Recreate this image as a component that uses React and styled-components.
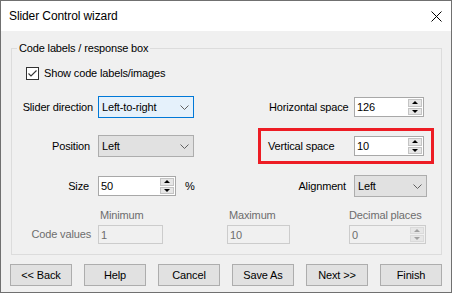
import React from 'react';
import styled, { createGlobalStyle } from 'styled-components';

const GlobalStyle = createGlobalStyle`
    html, body {
        margin: 0;
        padding: 0;
        background: #ffffff;
    }
    body {
        font-family: "Liberation Sans", Arial, sans-serif;
        color: #000;
    }
    * {
        box-sizing: border-box;
    }
`;

const Window = styled.div`
    width: 452px;
    height: 293px;
    border: 1px solid #707070;
    background-color: #f0f0f0;
    display: flex;
    flex-direction: column;
`;

const TitleBar = styled.header`
    height: 30px;
    flex: none;
    background-color: #ffffff;
    display: flex;
    align-items: center;
    justify-content: space-between;
    padding: 0 9px 0 8px;
    font-size: 12px;
    letter-spacing: -0.1px;
`;

const Content = styled.main`
    flex: 1;
    display: flex;
    flex-direction: column;
    padding: 10px 9px 6px 10px;
    font-size: 11px;
    letter-spacing: -0.15px;
`;

const GroupBox = styled.fieldset`
    margin: 0;
    padding: 5px 0 8px 0;
    border: 1px solid #dcdcdc;
    min-width: 0;
`;

const Caption = styled.legend`
    margin-left: 5px;
    padding: 0 2px;
    line-height: 14px;
`;

const Row = styled.div`
    height: ${p => p.$height}px;
    display: flex;
    align-items: center;
    padding-left: ${p => p.$indent || 0}px;
`;

const LeftCell = styled.div`
    width: 246px;
    flex: none;
    display: flex;
    align-items: center;
`;

const FieldLabel = styled.span`
    width: ${p => p.$width || 86}px;
    flex: none;
    text-align: ${p => p.$align || 'right'};
    padding-right: ${p => p.$padRight ?? 6}px;
    padding-left: ${p => p.$padLeft || 0}px;
    color: ${p => (p.$disabled ? '#6d6d6d' : '#000')};
    white-space: nowrap;
`;

const RightField = styled.div`
    width: 176px;
    height: 36px;
    flex: none;
    display: flex;
    align-items: center;
    border: 3px solid ${p => (p.$highlight ? '#ed1c24' : 'transparent')};
`;

const CheckRow = styled.label`
    display: flex;
    align-items: center;
    gap: 5px;
`;

const CheckBox = styled.span`
    width: 13px;
    height: 13px;
    border: 1px solid #333333;
    background: #ffffff;
    display: flex;
`;

const ComboFrame = styled.div`
    width: ${p => p.$width}px;
    height: 22px;
    flex: none;
    display: flex;
    align-items: center;
    justify-content: space-between;
    padding: 0 4px 0 3px;
    border: 1px solid ${p => (p.$focused ? '#0078d7' : '#adadad')};
    background-color: ${p => (p.$focused ? '#e5f1fb' : '#e1e1e1')};
`;

const EditFrame = styled.div`
    width: ${p => p.$width}px;
    height: ${p => p.$height || 20}px;
    flex: none;
    display: flex;
    align-items: stretch;
    border: 1px solid ${p => (p.$disabled ? '#cccccc' : '#a8a8a8')};
    background-color: ${p => (p.$disabled ? '#f0f0f0' : '#ffffff')};
    color: ${p => (p.$disabled ? '#6d6d6d' : '#000')};
`;

const EditValue = styled.span`
    flex: 1;
    display: flex;
    align-items: center;
    padding-left: 2px;
`;

const SpinButtons = styled.div`
    width: 14px;
    margin: 1px 1px 1px 0;
    display: flex;
    flex-direction: column;
    gap: 1px;
`;

const SpinButton = styled.span`
    flex: 1;
    display: flex;
    align-items: center;
    justify-content: center;
    background-color: #e6e6e6;
    border: 1px solid ${p => (p.$disabled ? '#dadada' : '#c4c4c4')};
`;

const Arrow = styled.span`
    width: 0;
    height: 0;
    border-left: 3px solid transparent;
    border-right: 3px solid transparent;
    ${p => (p.$up ? 'border-bottom' : 'border-top')}: 3px solid ${p => (p.$disabled ? '#a0a0a0' : '#000')};
`;

const Unit = styled.span`
    margin-left: 9px;
`;

const ValuesGrid = styled.div`
    height: 38px;
    display: grid;
    grid-template-columns: 86px 129px 122px 1fr;
    grid-template-rows: 14px 24px;
    align-items: start;
`;

const ValueCaption = styled.span`
    grid-row: 1;
    grid-column: ${p => p.$col};
    line-height: 14px;
    padding-left: ${p => p.$indent ?? 2}px;
    color: #6d6d6d;
`;

const ValueSlot = styled.div`
    grid-row: 2;
    grid-column: ${p => p.$col};
    padding-top: 3px;
`;

const ValuesLabel = styled(FieldLabel)`
    grid-row: 2;
    grid-column: 1;
    padding-top: 6px;
    padding-right: 7px;
`;

const ButtonBar = styled.footer`
    display: flex;
    gap: 12px;
    margin: 9px 0 0 -1px;
`;

const WizardButton = styled.button`
    width: 62px;
    height: 22px;
    padding: 0;
    border: 1px solid #adadad;
    background-color: #e1e1e1;
    font-family: inherit;
    font-size: 11px;
    letter-spacing: -0.15px;
    color: #000;
`;

function Chevron() {
    return (
        <svg width="9" height="5" viewBox="0 0 9 5">
            <polyline points="0.5,0.5 4.5,4.5 8.5,0.5" fill="none" stroke="#606060" strokeWidth="1" />
        </svg>
    );
}

function Combo({ value, width, focused }) {
    return (
        <ComboFrame $width={width} $focused={focused}>
            <span>{value}</span>
            <Chevron />
        </ComboFrame>
    );
}

function SpinBox({ value, width, height, disabled }) {
    return (
        <EditFrame $width={width} $height={height} $disabled={disabled}>
            <EditValue>{value}</EditValue>
            <SpinButtons>
                <SpinButton $disabled={disabled}><Arrow $up $disabled={disabled} /></SpinButton>
                <SpinButton $disabled={disabled}><Arrow $disabled={disabled} /></SpinButton>
            </SpinButtons>
        </EditFrame>
    );
}

const buttons = ['<< Back', 'Help', 'Cancel', 'Save As', 'Next >>', 'Finish'];

export default function App() {
    return (
        <>
            <GlobalStyle />
            <Window>
                <TitleBar>
                    <span>Slider Control wizard</span>
                    <svg width="11" height="11" viewBox="0 0 11 11">
                        <path d="M0.5 0.5 L10.5 10.5 M10.5 0.5 L0.5 10.5" stroke="#000" strokeWidth="1" />
                    </svg>
                </TitleBar>
                <Content>
                    <GroupBox>
                        <Caption>Code labels / response box</Caption>
                        <Row $height={26} $indent={14}>
                            <CheckRow>
                                <CheckBox>
                                    <svg width="11" height="11" viewBox="0 0 11 11">
                                        <polyline points="1.5,5.5 4,8 9.5,2.5" fill="none" stroke="#333" strokeWidth="1.1" />
                                    </svg>
                                </CheckBox>
                                Show code labels/images
                            </CheckRow>
                        </Row>
                        <Row $height={42}>
                            <LeftCell>
                                <FieldLabel $padRight={5}>Slider direction</FieldLabel>
                                <Combo value="Left-to-right" width={96} focused />
                            </LeftCell>
                            <RightField>
                                <FieldLabel $width={93} $align="left" $padLeft={8} $padRight={0}>Horizontal space</FieldLabel>
                                <SpinBox value="126" width={70} />
                            </RightField>
                        </Row>
                        <Row $height={36}>
                            <LeftCell>
                                <FieldLabel $padRight={8}>Position</FieldLabel>
                                <Combo value="Left" width={96} />
                            </LeftCell>
                            <RightField $highlight>
                                <FieldLabel $width={93} $align="left" $padLeft={7} $padRight={0}>Vertical space</FieldLabel>
                                <SpinBox value="10" width={70} />
                            </RightField>
                        </Row>
                        <Row $height={44}>
                            <LeftCell>
                                <FieldLabel $padRight={9}>Size</FieldLabel>
                                <SpinBox value="50" width={78} />
                                <Unit>%</Unit>
                            </LeftCell>
                            <RightField>
                                <FieldLabel $width={93} $padRight={8}>Alignment</FieldLabel>
                                <Combo value="Left" width={73} />
                            </RightField>
                        </Row>
                        <ValuesGrid>
                            <ValuesLabel $disabled>Code values</ValuesLabel>
                            <ValueCaption $col={2}>Minimum</ValueCaption>
                            <ValueSlot $col={2}>
                                <EditFrame $width={65} $height={19} $disabled>
                                    <EditValue>1</EditValue>
                                </EditFrame>
                            </ValueSlot>
                            <ValueCaption $col={3}>Maximum</ValueCaption>
                            <ValueSlot $col={3}>
                                <EditFrame $width={63} $height={19} $disabled>
                                    <EditValue>10</EditValue>
                                </EditFrame>
                            </ValueSlot>
                            <ValueCaption $col={4} $indent={0}>Decimal places</ValueCaption>
                            <ValueSlot $col={4}>
                                <SpinBox value="0" width={77} height={19} disabled />
                            </ValueSlot>
                        </ValuesGrid>
                    </GroupBox>
                    <ButtonBar>
                        {buttons.map(label => (
                            <WizardButton key={label}>{label}</WizardButton>
                        ))}
                    </ButtonBar>
                </Content>
            </Window>
        </>
    );
}
